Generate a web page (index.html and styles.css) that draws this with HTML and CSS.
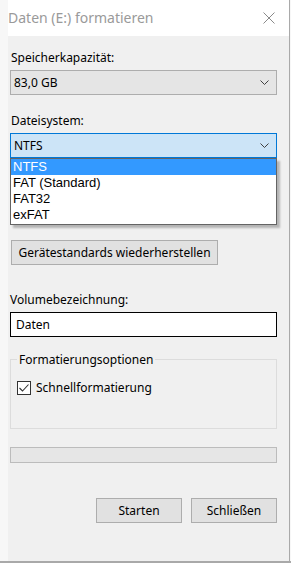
FILE: index.html
```html
<!DOCTYPE html>
<html lang="de">
<head>
    <meta charset="UTF-8">
    <meta name="viewport" content="width=device-width, initial-scale=1.0">
    <title>Daten (E:) formatieren</title>
    <link rel="stylesheet" href="styles.css">
</head>
<body>
    <div class="screen">
        <div class="window">
            <div class="titlebar">
                <span class="title">Daten (E:) formatieren</span>
                <svg class="close" width="12" height="12" viewBox="0 0 12 12">
                    <path d="M0.5 0.5 L11.5 11.5 M11.5 0.5 L0.5 11.5" stroke="#8a8a8a" stroke-width="1" fill="none"/>
                </svg>
            </div>

            <div class="content">
                <label class="field-label first">Speicherkapazität:</label>
                <div class="combo">
                    <span>83,0 GB</span>
                    <svg class="chevron" width="9" height="5" viewBox="0 0 9 5"><path d="M0.5 0.5 L4.5 4.5 L8.5 0.5" stroke="#404040" fill="none"/></svg>
                </div>

                <label class="field-label">Dateisystem:</label>
                <div class="combo-wrap">
                    <div class="combo open">
                        <span>NTFS</span>
                        <svg class="chevron" width="9" height="5" viewBox="0 0 9 5"><path d="M0.5 0.5 L4.5 4.5 L8.5 0.5" stroke="#404040" fill="none"/></svg>
                    </div>
                    <ul class="dropdown">
                        <li class="selected">NTFS</li>
                        <li>FAT (Standard)</li>
                        <li>FAT32</li>
                        <li>exFAT</li>
                    </ul>
                </div>

                <button class="btn restore">Gerätestandards wiederherstellen</button>

                <label class="field-label volume">Volumebezeichnung:</label>
                <div class="textbox">Daten</div>

                <fieldset class="options">
                    <legend>Formatierungsoptionen</legend>
                    <div class="check-row">
                        <span class="checkbox">
                            <svg width="12" height="12" viewBox="0 0 12 12"><path d="M1.5 6 L4.5 9 L10.5 2.5" stroke="#333" stroke-width="1.1" fill="none"/></svg>
                        </span>
                        <span>Schnellformatierung</span>
                    </div>
                </fieldset>

                <div class="progress"></div>

                <div class="actions">
                    <button class="btn">Starten</button>
                    <button class="btn">Schließen</button>
                </div>
            </div>
        </div>
    </div>
</body>
</html>
```

FILE: styles.css
```css
body {
    margin: 0;
    background-color: #f7f7f7;
    font-family: "Noto Sans", "DejaVu Sans", sans-serif;
    font-size: 12px;
    color: #000;
}
.screen {
    height: 561px;
    border-bottom: 2px solid #a9a9a9;
    display: flex;
}
.window {
    margin-left: 8px;
    width: 281px;
    border-right: 1px solid #a9a9a9;
    background-color: #f0f0f0;
    display: flex;
    flex-direction: column;
}
.titlebar {
    height: 36px;
    background-color: #fff;
    display: flex;
    align-items: center;
    justify-content: space-between;
    padding: 0 14px 0 0;
}
.title {
    font-size: 14px;
    color: #9a9a9a;
    margin-top: -1px;
}
.close {
    margin-top: -1px;
}
.content {
    padding: 0 12px 0 2px;
    display: flex;
    flex-direction: column;
}
.field-label {
    display: block;
    line-height: 15px;
    margin: 18px 0 5px 1px;
}
.field-label.first {
    margin-top: 14px;
}
.field-label.volume {
    margin-top: 27px;
    margin-left: 0;
}
.combo {
    height: 25px;
    box-sizing: border-box;
    border: 1px solid #adadad;
    background-color: #e5e5e5;
    display: flex;
    align-items: center;
    justify-content: space-between;
    padding: 0 7px 0 3px;
}
.combo.open {
    background-color: #cce4f7;
    border-color: #0078d7;
}
.combo-wrap {
    position: relative;
}
.dropdown {
    position: absolute;
    top: 25px;
    left: 0;
    right: 0;
    margin: 0;
    padding: 0 0 1px;
    list-style: none;
    background-color: #fff;
    border: 1px solid #646464;
    box-shadow: 3px 3px 2px rgba(0,0,0,0.25);
    font-family: "Liberation Sans", Arial, sans-serif;
    font-size: 13px;
}
.dropdown li {
    height: 16px;
    line-height: 16px;
    padding-left: 2px;
}
.dropdown li.selected {
    background-color: #3399ff;
    color: #fff;
}
.btn {
    font-family: inherit;
    font-size: 12px;
    color: #000;
    height: 25px;
    box-sizing: border-box;
    border: 1px solid #adadad;
    background-color: #e1e1e1;
    padding: 0;
}
.restore {
    align-self: flex-start;
    margin: 82px 0 0 1px;
    width: 207px;
}
.textbox {
    height: 25px;
    box-sizing: border-box;
    border: 1px solid #000;
    background-color: #fff;
    display: flex;
    align-items: center;
    padding-left: 5px;
}
.options {
    margin: 15px 0 0;
    padding: 0 6px;
    height: 77px;
    box-sizing: border-box;
    border: 1px solid #dcdcdc;
}
.options legend {
    padding: 0 2px;
    line-height: 15px;
}
.check-row {
    display: flex;
    align-items: center;
    margin-top: 12px;
    gap: 5px;
}
.checkbox {
    width: 14px;
    height: 14px;
    box-sizing: border-box;
    border: 1px solid #333;
    background-color: #fff;
    display: flex;
    align-items: center;
    justify-content: center;
}
.progress {
    margin-top: 18px;
    height: 16px;
    box-sizing: border-box;
    border: 1px solid #bcbcbc;
    background-color: #e6e6e6;
}
.actions {
    display: flex;
    justify-content: flex-end;
    gap: 9px;
    margin-top: 35px;
}
.actions .btn {
    width: 86px;
}
```
